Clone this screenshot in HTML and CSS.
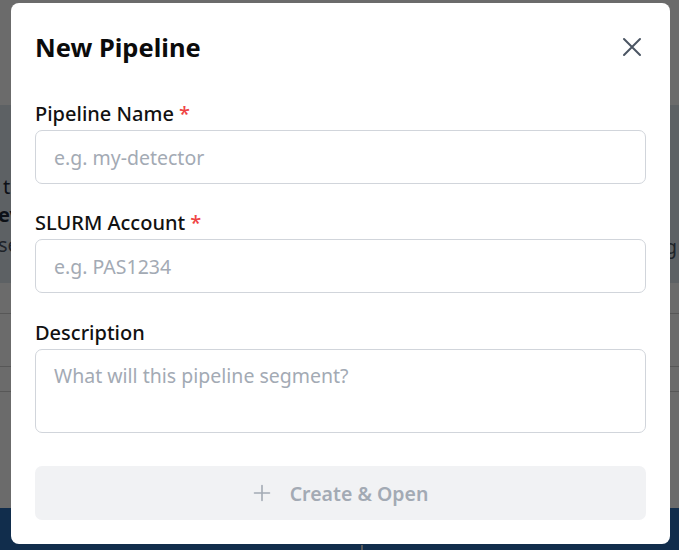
FILE: index.html
```html
<!DOCTYPE html>
<html lang="en">
<head>
<meta charset="utf-8">
<title>New Pipeline</title>
<link rel="stylesheet" href="styles.css">
</head>
<body>
<div class="page">
  <div class="page-top"></div>
  <div class="page-band">
    <div class="band-left">
      <span class="bl-1">t</span>
      <span class="bl-2">ev</span>
      <span class="bl-3">se</span>
    </div>
    <div class="band-right">g</div>
  </div>
  <div class="page-rows">
    <div class="row r1"></div>
    <div class="row r2"></div>
    <div class="row r3"></div>
  </div>
  <div class="page-footer"><span class="footer-tick"></span></div>
</div>

<div class="overlay">
  <div class="modal" role="dialog" aria-labelledby="modal-title">
    <div class="modal-header">
      <h2 id="modal-title" class="modal-title">New Pipeline</h2>
      <button class="close-btn" aria-label="Close">
        <svg width="22" height="22" viewBox="0 0 22 22" fill="none" stroke="currentColor" stroke-width="2" stroke-linecap="round">
          <path d="M3 3 L19 19 M19 3 L3 19"/>
        </svg>
      </button>
    </div>
    <form class="modal-form">
      <div class="field">
        <label class="field-label">Pipeline Name <span class="req">*</span></label>
        <input class="field-input" type="text" placeholder="e.g. my-detector">
      </div>
      <div class="field">
        <label class="field-label">SLURM Account <span class="req">*</span></label>
        <input class="field-input" type="text" placeholder="e.g. PAS1234">
      </div>
      <div class="field field-last">
        <label class="field-label">Description</label>
        <textarea class="field-input field-textarea" placeholder="What will this pipeline segment?"></textarea>
      </div>
      <button type="button" class="submit-btn" disabled>
        <svg width="18" height="18" viewBox="0 0 18 18" fill="none" stroke="currentColor" stroke-width="1.6" stroke-linecap="round">
          <path d="M9 1.5 V16.5 M1.5 9 H16.5"/>
        </svg>
        <span>Create &amp; Open</span>
      </button>
    </form>
  </div>
</div>
</body>
</html>
```

FILE: styles.css
```css
* { box-sizing: border-box; }

html, body {
  margin: 0;
  padding: 0;
  height: 100%;
}

body {
  font-family: "Noto Sans", "Open Sans", Arial, sans-serif;
  background: #ffffff;
  overflow: hidden;
}

/* ---------- background page ---------- */
.page {
  height: 550px;
  display: flex;
  flex-direction: column;
}

.page-top {
  height: 105px;
  background: #ffffff;
}

.page-band {
  height: 178px;
  background: #dee6ef;
  display: flex;
  justify-content: space-between;
  color: #1f2937;
  font-size: 20px;
}

.band-left {
  display: flex;
  flex-direction: column;
  padding-top: 68px;
  line-height: 28px;
}

.bl-1 { padding-left: 3px; }
.bl-2 { font-weight: 700; margin-left: -2px; }
.bl-3 { margin-left: -2px; color: #4b5563; margin-top: 2px; }

.band-right {
  padding-top: 128px;
  padding-right: 2px;
  color: #4b5563;
  line-height: 28px;
}

.page-rows {
  flex: 1;
  display: flex;
  flex-direction: column;
  padding-top: 30px;
}

.row {
  border-bottom: 1px solid #cfcfcf;
}
.r1 { height: 1px; }
.r2 { height: 53px; }
.r3 { height: 25px; }

.page-footer {
  height: 42px;
  background: #2a6db5;
  display: flex;
  justify-content: center;
  align-items: flex-end;
}

.footer-tick {
  width: 2px;
  height: 5px;
  background: #cccccc;
  margin-left: 45px;
}

/* ---------- overlay + modal ---------- */
.overlay {
  position: fixed;
  inset: 0;
  background: rgba(0, 0, 0, 0.58);
  display: flex;
  justify-content: center;
  align-items: flex-start;
  padding-top: 3px;
}

.modal {
  width: 659px;
  height: 541px;
  margin-left: 2px;
  background: #ffffff;
  border-radius: 8px;
  padding: 24px 24px 25px 24px;
  display: flex;
  flex-direction: column;
}

.modal-header {
  display: flex;
  align-items: center;
  justify-content: space-between;
  height: 40px;
}

.modal-title {
  margin: 0;
  font-size: 25.5px;
  font-weight: 700;
  color: #0b0b0b;
  line-height: 40px;
}

.close-btn {
  background: none;
  border: none;
  padding: 0;
  width: 22px;
  height: 22px;
  color: #4b5563;
  margin-right: 3px;
  display: flex;
  cursor: pointer;
}

.modal-form {
  margin-top: 33px;
  display: flex;
  flex-direction: column;
}

.field {
  display: flex;
  flex-direction: column;
  gap: 2px;
  margin-bottom: 25px;
}

.field-last {
  margin-top: 1px;
  margin-bottom: 33px;
}

.field-label {
  font-size: 20px;
  font-weight: 500;
  color: #111111;
  line-height: 28px;
}

.req { color: #ef4444; }

.field-input {
  height: 54px;
  border: 1px solid #d1d5db;
  border-radius: 7px;
  padding: 0 18px;
  font-family: inherit;
  font-size: 19.5px;
  color: #111827;
  background: #ffffff;
  outline: none;
}

.field-input::placeholder { color: #a3aab4; }

.field-textarea {
  height: 84px;
  padding: 12px 18px;
  resize: none;
  line-height: 28px;
}

.submit-btn {
  height: 54px;
  border: none;
  border-radius: 7px;
  background: #f1f2f4;
  color: #a3aab4;
  font-family: inherit;
  font-size: 19.5px;
  font-weight: 600;
  display: flex;
  align-items: center;
  justify-content: center;
  gap: 19px;
}
```
